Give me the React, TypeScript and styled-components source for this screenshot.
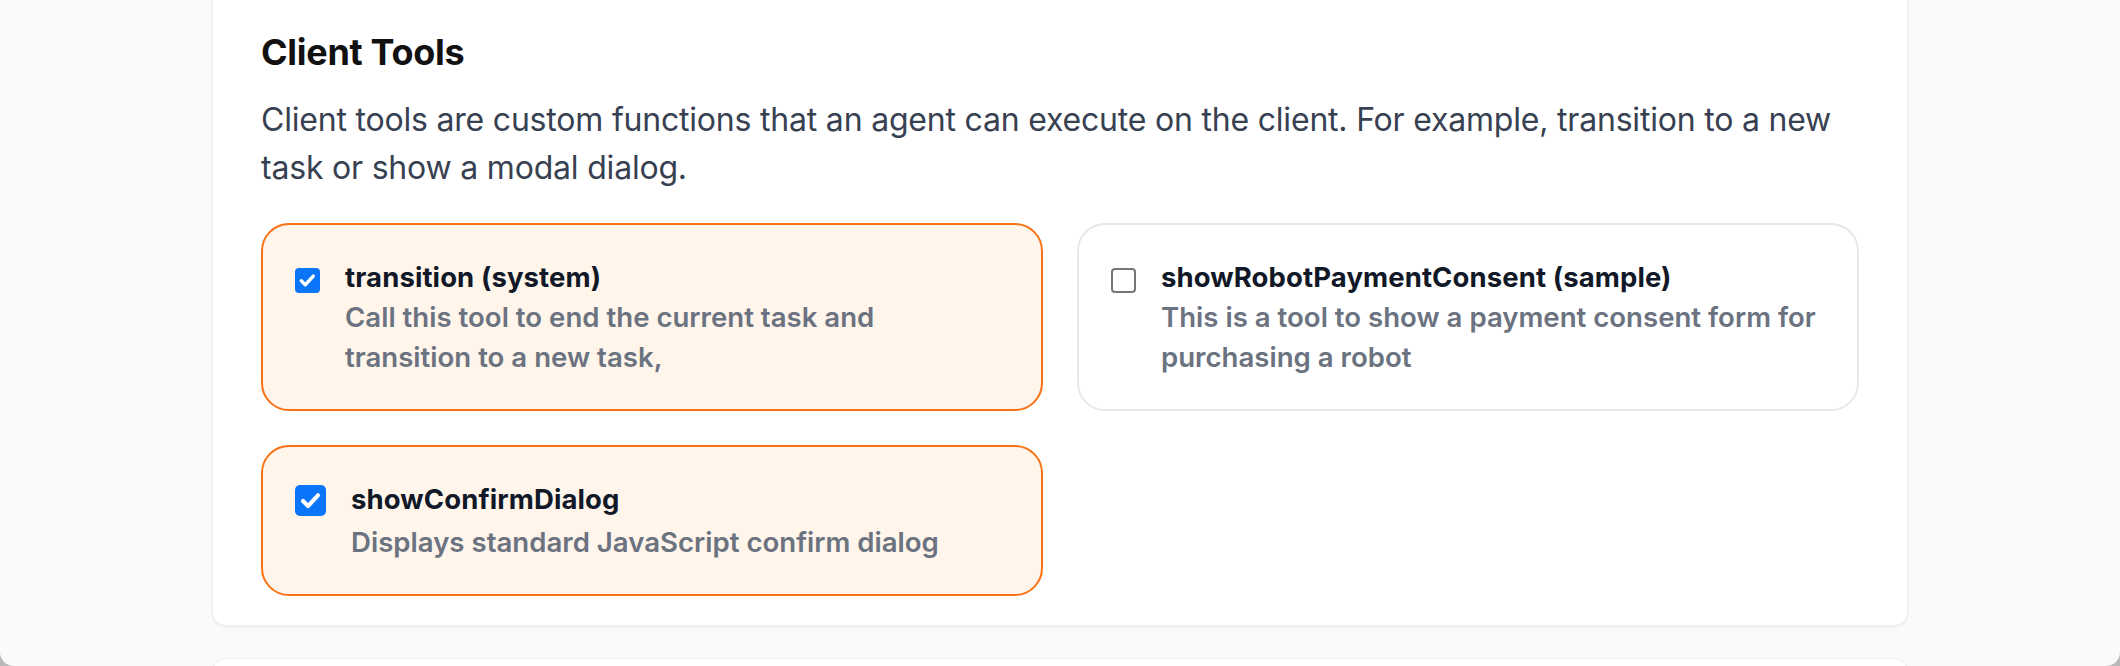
import React, { FC } from 'react';
import styled, { createGlobalStyle } from 'styled-components';

const GlobalStyle = createGlobalStyle`
  html, body {
    margin: 0;
    padding: 0;
    background: #b9b9bb;
  }
  body {
    font-family: Inter, 'Noto Sans', sans-serif;
    -webkit-font-smoothing: antialiased;
  }
`;

type Tool = {
  name: string;
  description: string;
  checked: boolean;
  large?: boolean;
};

const tools: Tool[] = [
  {
    name: 'transition (system)',
    description: 'Call this tool to end the current task and\ntransition to a new task,',
    checked: true,
  },
  {
    name: 'showRobotPaymentConsent (sample)',
    description: 'This is a tool to show a payment consent form for\npurchasing a robot',
    checked: false,
  },
  {
    name: 'showConfirmDialog',
    description: 'Displays standard JavaScript confirm dialog',
    checked: true,
    large: true,
  },
];

const Page = styled.div`
  height: 666px;
  overflow: hidden;
  background: #f9fafb;
  border-radius: 0 0 14px 14px;
`;

const Panel = styled.section`
  box-sizing: border-box;
  width: 1696px;
  margin: -40px auto 0;
  padding: 67px 48px 29px;
  background: #ffffff;
  border: 1px solid #eef0f3;
  border-radius: 14px;
  box-shadow: 0 1px 3px rgba(15, 23, 42, 0.08);
`;

const NextPanel = styled(Panel)`
  margin-top: 32px;
  height: 120px;
`;

const Heading = styled.h2`
  margin: 0;
  font-size: 36px;
  line-height: 48px;
  font-weight: 700;
  color: #111111;
  letter-spacing: -0.3px;
`;

const Intro = styled.p`
  margin: 20px 0 0;
  font-size: 32px;
  line-height: 48px;
  font-weight: 400;
  color: #374151;
  letter-spacing: -0.2px;
  white-space: pre-line;
`;

const ToolGrid = styled.div`
  display: grid;
  grid-template-columns: 1fr 1fr;
  gap: 34px;
  margin-top: 31px;
  align-items: start;
`;

const ToolCard = styled.label<{ $active: boolean }>`
  box-sizing: border-box;
  display: flex;
  align-items: flex-start;
  gap: 25px;
  padding: 32px;
  border: 2px solid ${p => (p.$active ? '#f97316' : '#e5e7eb')};
  border-radius: 28px;
  background: ${p => (p.$active ? '#fff5eb' : '#ffffff')};
  cursor: pointer;
`;

const Box = styled.span<{ $checked: boolean; $large?: boolean }>`
  box-sizing: border-box;
  flex: none;
  display: flex;
  align-items: center;
  justify-content: center;
  width: ${p => (p.$large ? '31px' : '25px')};
  height: ${p => (p.$large ? '31px' : '25px')};
  margin-top: ${p => (p.$large ? '6px' : '11px')};
  border-radius: ${p => (p.$large ? '5px' : '4px')};
  background: ${p => (p.$checked ? '#0a75f8' : '#ffffff')};
  border: ${p => (p.$checked ? 'none' : '2px solid #767676')};

  svg {
    width: 74%;
    height: 74%;
  }
`;

const ToolText = styled.div`
  display: flex;
  flex-direction: column;
`;

const ToolName = styled.span<{ $large?: boolean }>`
  font-size: 27.5px;
  line-height: 40px;
  font-weight: 700;
  color: #111827;
  letter-spacing: 0.1px;
  margin-bottom: ${p => (p.$large ? '3px' : '0')};
`;

const ToolDescription = styled.span`
  font-size: 27.6px;
  line-height: 40px;
  font-weight: 600;
  color: #6b7280;
  white-space: pre-line;
`;

const Checkbox: FC<{ checked: boolean; large?: boolean }> = ({ checked, large }) => (
  <Box $checked={checked} $large={large}>
    {checked && (
      <svg viewBox='0 0 16 16' fill='none'>
        <path
          d='M2.8 8.4 L6.3 11.9 L13.2 4.4'
          stroke='#ffffff'
          strokeWidth='2.9'
          strokeLinecap='round'
          strokeLinejoin='round'
        />
      </svg>
    )}
  </Box>
);

const App: FC = () => {
  return (
    <>
      <GlobalStyle />
      <Page>
        <Panel>
          <Heading>Client Tools</Heading>
          <Intro>
            {'Client tools are custom functions that an agent can execute on the client. For example, transition to a new\ntask or show a modal dialog.'}
          </Intro>
          <ToolGrid>
            {tools.map(tool => (
              <ToolCard key={tool.name} $active={tool.checked}>
                <Checkbox checked={tool.checked} large={tool.large} />
                <ToolText>
                  <ToolName $large={tool.large}>{tool.name}</ToolName>
                  <ToolDescription>{tool.description}</ToolDescription>
                </ToolText>
              </ToolCard>
            ))}
          </ToolGrid>
        </Panel>
        <NextPanel />
      </Page>
    </>
  );
};

export default App;
